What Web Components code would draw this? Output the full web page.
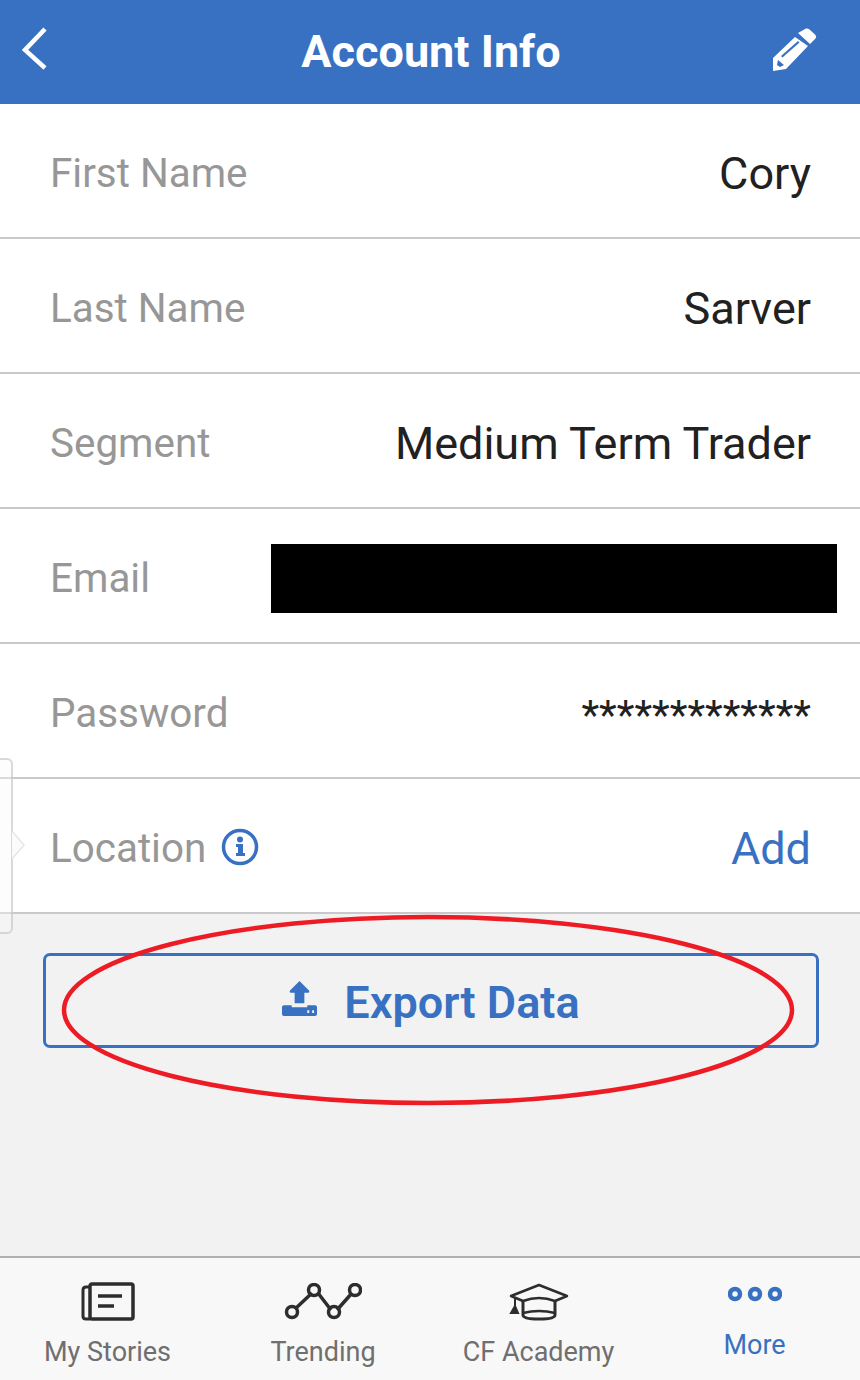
<!DOCTYPE html>
<html>
<head>
<meta charset="utf-8">
<title>Account Info</title>
<style>
  html, body { margin: 0; padding: 0; height: 100%; }
  body { font-family: Roboto, "Liberation Sans", sans-serif; }
</style>
</head>
<body>
<account-screen></account-screen>

<script>
// app header with back arrow and edit pencil
class AppHeader extends HTMLElement {
    constructor() {
        super();
        this.attachShadow({ mode: 'open' });
        this.shadowRoot.innerHTML = `
        <style>
          :host {
            display: grid;
            grid-template-columns: 1fr auto 1fr;
            align-items: center;
            height: 104px;
            padding: 0 18px 0 20px;
            background: #3871c1;
            color: #fff;
            flex: none;
          }
          h1 {
            margin: -1px 0 0;
            text-align: center;
            font-size: 45px;
            font-weight: 700;
            white-space: nowrap;
          }
          svg { display: block; }
          .back { margin-top: -6px; }
          .edit { justify-self: end; margin: -5px 25px 0 0; }
        </style>
        <svg class="back" width="28" height="44" viewBox="0 0 28 44"><path d="M25 2 L5 23 L25 41" fill="none" stroke="#fff" stroke-width="4.5"/></svg>
        <h1><slot></slot></h1>
        <svg class="edit" width="44" height="44" viewBox="0 0 44 44">
          <path fill="#fff" d="M25 5 L33 0.500 Q35 0 36.500 1.500 L42.500 7 Q44 9 42.500 10.500 L37 16 Z"/>
          <path fill="#fff" fill-rule="evenodd" d="M22 9 L35 18 L13 41 L0 43 L0 30 Z M25 13 L8 28 L9.500 29.500 L26.500 14.500 Z M5 32 L4 37 L7 39 L11 37 Z"/>
        </svg>
        `;
    }
}

// label on the left, value on the right
class InfoRow extends HTMLElement {
    constructor() {
        super();
        this.attachShadow({ mode: 'open' });
        this.shadowRoot.innerHTML = `
        <style>
          :host {
            display: flex;
            align-items: center;
            justify-content: space-between;
            height: 127px;
            padding: 6px 49px 0 50px;
            background: #fff;
            border-bottom: 2px solid #c9c9cb;
            font-size: 45px;
            color: #212121;
            flex: none;
          }
          .label {
            display: flex;
            align-items: center;
            gap: 15px;
            color: #979797;
            font-size: 40.400px;
          }
        </style>
        <div class="label"><span id="name"></span><slot name="icon"></slot></div>
        <div><slot></slot></div>
        `;
    }

    connectedCallback() {
        this.shadowRoot.querySelector('#name').textContent = this.getAttribute('label');
    }
}

class ExportButton extends HTMLElement {
    constructor() {
        super();
        this.attachShadow({ mode: 'open' });
        this.shadowRoot.innerHTML = `
        <style>
          :host {
            display: flex;
            align-items: center;
            justify-content: center;
            gap: 27px;
            height: 87px;
            margin: 39px 41px 0 43px;
            padding-top: 2px;
            border: 3px solid #3871c1;
            border-radius: 7px;
            color: #3871c1;
            font-size: 45px;
            font-weight: 600;
          }
          svg { display: block; margin-top: -6px; }
          span { margin-top: 2px; }
        </style>
        <svg width="35" height="35" viewBox="0 0 36 36">
          <path fill="#3871c1" d="M18 0 L28 10 Q28.500 12 27 12 L23 12 L23 23 L13 23 L13 12 L9 12 Q7.500 12 8 10 Z"/>
          <path fill="#3871c1" fill-rule="evenodd" d="M2 25 L10 25 L10 27 L26 27 L26 25 L34 25 Q36 25 36 27 L36 34 Q36 36 34 36 L2 36 Q0 36 0 34 L0 27 Q0 25 2 25 Z M26 30 L26 33 L28 33 L28 30 Z M31 30 L31 33 L33 33 L33 30 Z"/>
        </svg>
        <span><slot></slot></span>
        `;
    }
}

class NavItem extends HTMLElement {
    constructor() {
        super();
        this.attachShadow({ mode: 'open' });
        this.shadowRoot.innerHTML = `
        <style>
          :host {
            display: flex;
            flex-direction: column;
            align-items: center;
            color: #6f6f6f;
            font-size: 27px;
          }
          :host([active]) { color: #3871c1; }
          .icon { height: 48px; display: flex; align-items: center; justify-content: center; }
          .text { margin-top: 10px; white-space: nowrap; }
          :host([active]) .text { margin: 3px 0 0 3px; }
        </style>
        <div class="icon"><slot name="icon"></slot></div>
        <div class="text"><slot></slot></div>
        `;
    }
}

class BottomNav extends HTMLElement {
    constructor() {
        super();
        this.attachShadow({ mode: 'open' });
        this.shadowRoot.innerHTML = `
        <style>
          :host {
            display: grid;
            grid-template-columns: 215px 216px 215px 214px;
            height: 124px;
            padding-top: 20px;
            box-sizing: border-box;
            background: #f8f8f8;
            border-top: 2px solid #b0b0b0;
            flex: none;
          }
        </style>
        <slot></slot>
        `;
    }
}

// whole screen, the ellipse and the side tab lie over the content
class AccountScreen extends HTMLElement {
    constructor() {
        super();
        this.attachShadow({ mode: 'open' });
        this.shadowRoot.innerHTML = `
        <style>
          :host {
            display: flex;
            flex-direction: column;
            position: relative;
            width: 860px;
            height: 1380px;
            overflow: hidden;
            background: #f2f2f2;
          }
          main { flex: 1; min-height: 0; display: flex; flex-direction: column; }
          .redact {
            position: absolute;
            left: 271px;
            top: 544px;
            width: 566px;
            height: 69px;
            background: #000;
          }
          .tab {
            position: absolute;
            left: -11px;
            top: 758px;
            width: 20px;
            height: 172px;
            border: 2px solid rgba(180, 190, 195, .55);
            border-radius: 6px;
            background: rgba(248, 248, 248, .35);
          }
          .arrow {
            position: absolute;
            left: 12px;
            top: 829px;
            display: block;
          }
          .ellipse {
            position: absolute;
            left: 60px;
            top: 914px;
            display: block;
          }
          .add { color: #3871c1; }
          .stars { font-size: 41px; }
          svg { display: block; }
          .info { margin-top: -4px; }
        </style>
        <app-header>Account Info</app-header>
        <info-row label="First Name">Cory</info-row>
        <info-row label="Last Name">Sarver</info-row>
        <info-row label="Segment">Medium Term Trader</info-row>
        <info-row label="Email"></info-row>
        <info-row label="Password"><span class="stars">*************</span></info-row>
        <info-row label="Location">
          <svg class="info" slot="icon" width="38" height="38" viewBox="0 0 38 38">
            <circle cx="19" cy="19" r="16.500" fill="none" stroke="#3871c1" stroke-width="3.500"/>
            <circle cx="19" cy="11.500" r="3" fill="#3871c1"/>
            <path fill="#3871c1" d="M15 16 H22 V25 H24 V28 H15 V25 H17 V19 H15 Z"/>
          </svg>
          <span class="add">Add</span>
        </info-row>
        <main>
          <export-button>Export Data</export-button>
        </main>
        <bottom-nav>
          <nav-item>
            <svg slot="icon" width="54" height="40" viewBox="0 0 54 40">
              <rect x="9" y="2" width="43" height="35" rx="2" fill="none" stroke="#2d2d2d" stroke-width="3.500"/>
              <path d="M9 5 H5 Q2 5 2 8 V34 Q2 37 5 37 H9" fill="none" stroke="#2d2d2d" stroke-width="3"/>
              <path d="M17 14 H41 M17 24 H33" fill="none" stroke="#2d2d2d" stroke-width="3.500"/>
            </svg>
            My Stories
          </nav-item>
          <nav-item>
            <svg slot="icon" width="78" height="38" viewBox="0 0 78 38">
              <path d="M11 26 L28 10 M34 10 L47 27 M53 27 L68 10" fill="none" stroke="#2d2d2d" stroke-width="3.500"/>
              <circle cx="8" cy="29" r="5.500" fill="none" stroke="#2d2d2d" stroke-width="3.500"/>
              <circle cx="30" cy="7" r="5.500" fill="none" stroke="#2d2d2d" stroke-width="3.500"/>
              <circle cx="50" cy="29" r="5.500" fill="none" stroke="#2d2d2d" stroke-width="3.500"/>
              <circle cx="71" cy="7" r="5.500" fill="none" stroke="#2d2d2d" stroke-width="3.500"/>
            </svg>
            Trending
          </nav-item>
          <nav-item>
            <svg slot="icon" width="62" height="38" viewBox="0 0 62 38">
              <path d="M31 2 L59 13 L47 18 Q31 12 15 18 L3 13 Z" fill="none" stroke="#2d2d2d" stroke-width="2.500" stroke-linejoin="round"/>
              <path d="M15 17 V32 Q15 36 31 36 Q47 36 47 32 V17" fill="none" stroke="#2d2d2d" stroke-width="3"/>
              <path d="M15 30 Q31 26 47 30" fill="none" stroke="#2d2d2d" stroke-width="2.500"/>
              <path d="M7 15 V23 M7 23 L3 30 H10 Z" fill="#2d2d2d" stroke="#2d2d2d" stroke-width="2"/>
            </svg>
            CF Academy
          </nav-item>
          <nav-item active>
            <svg slot="icon" width="54" height="18" viewBox="0 0 54 18" style="margin:-17px 0 0 4px">
              <circle cx="7" cy="9" r="5" fill="none" stroke="#3871c1" stroke-width="4.500"/>
              <circle cx="27" cy="9" r="5" fill="none" stroke="#3871c1" stroke-width="4.500"/>
              <circle cx="47" cy="9" r="5" fill="none" stroke="#3871c1" stroke-width="4.500"/>
            </svg>
            More
          </nav-item>
        </bottom-nav>

        <div class="tab"></div>
        <svg class="arrow" width="14" height="32" viewBox="0 0 14 32">
          <path d="M0 2 L12 16 L0 30" fill="#fbfbfb" stroke="#e6e6e6" stroke-width="1.500"/>
        </svg>
        <div class="redact"></div>
        <svg class="ellipse" width="736" height="192" viewBox="0 0 736 192">
          <ellipse cx="368" cy="96" rx="364" ry="93" fill="none" stroke="#ed1c24" stroke-width="4.500"/>
        </svg>
        `;
    }
}

customElements.define('app-header', AppHeader);
customElements.define('info-row', InfoRow);
customElements.define('export-button', ExportButton);
customElements.define('nav-item', NavItem);
customElements.define('bottom-nav', BottomNav);
customElements.define('account-screen', AccountScreen);
</script>
</body>
</html>
